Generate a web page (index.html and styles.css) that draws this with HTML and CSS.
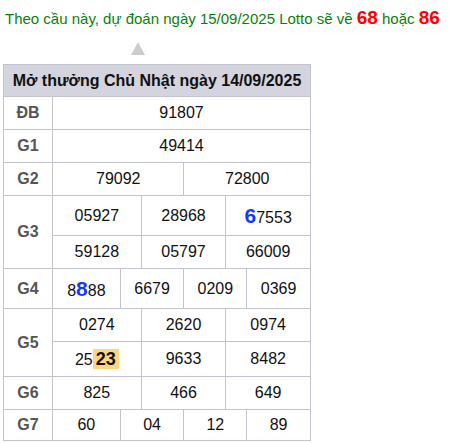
FILE: index.html
```html
<!DOCTYPE html>
<html lang="vi">
<head>
<meta charset="utf-8">
<link rel="stylesheet" href="styles.css">
</head>
<body>
<div class="page">
  <p class="predict">Theo cầu này, dự đoán ngày 15/09/2025 Lotto sẽ về <b class="hot">68</b> hoặc <b class="hot">86</b></p>
  <div class="arrow"></div>
  <table class="kq">
    <tr><th colspan="2" class="head">Mở thưởng Chủ Nhật ngày 14/09/2025</th></tr>
    <tr><td class="lbl">ĐB</td><td class="nums"><div class="r c1"><div>91807</div></div></td></tr>
    <tr><td class="lbl">G1</td><td class="nums"><div class="r c1"><div>49414</div></div></td></tr>
    <tr><td class="lbl">G2</td><td class="nums"><div class="r c2"><div>79092</div><div>72800</div></div></td></tr>
    <tr><td class="lbl">G3</td><td class="nums">
      <div class="r c3 tall"><div>05927</div><div>28968</div><div><b class="big">6</b>7553</div></div>
      <div class="r c3 sep"><div>59128</div><div>05797</div><div>66009</div></div>
    </td></tr>
    <tr><td class="lbl">G4</td><td class="nums"><div class="r c4 tall"><div>8<b class="big">8</b>88</div><div>6679</div><div>0209</div><div>0369</div></div></td></tr>
    <tr><td class="lbl">G5</td><td class="nums">
      <div class="r c3"><div>0274</div><div>2620</div><div>0974</div></div>
      <div class="r c3 sep mid"><div>25<b class="mark">23</b></div><div>9633</div><div>8482</div></div>
    </td></tr>
    <tr><td class="lbl">G6</td><td class="nums"><div class="r c3"><div>825</div><div>466</div><div>649</div></div></td></tr>
    <tr><td class="lbl">G7</td><td class="nums"><div class="r c4 last"><div>60</div><div>04</div><div>12</div><div>89</div></div></td></tr>
  </table>
</div>
</body>
</html>
```
FILE: styles.css
```css
* { box-sizing: border-box; }
body {
  margin: 0;
  background: #fff;
  font-family: "Liberation Sans", Arial, sans-serif;
}
.page { padding: 8px 0 0 3px; }
.predict {
  margin: 0 0 0 2px;
  font-size: 15px;
  line-height: 20px;
  color: #0a7f0a;
  white-space: nowrap;
}
.hot { color: #ff0000; font-size: 19px; }
.arrow {
  width: 0; height: 0;
  margin: 13px 0 9px 128px;
  border-left: 7.5px solid transparent;
  border-right: 7.5px solid transparent;
  border-bottom: 13px solid #cccccc;
}
.kq {
  width: 308px;
  border-collapse: collapse;
  border: 1px solid #c3c3cd;
  font-size: 16px;
  color: #111;
}
.kq td, .kq th { border: 1px solid #c3c3cd; padding: 0; }
.head {
  background: #d3d4dd;
  height: 32px;
  font-weight: bold;
  text-align: center;
  color: #111;
}
.lbl {
  width: 49px;
  text-align: center;
  font-weight: bold;
  color: #555;
}
.r { display: grid; }
.r > div {
  text-align: center;
  padding: 7px 0;
  line-height: 18px;
  border-left: 1px solid #c3c3cd;
}
.r > div:first-child { border-left: 0; }
.c1 { grid-template-columns: 1fr; }
.c2 { grid-template-columns: 131fr 127fr; }
.c3 { grid-template-columns: 88fr 85fr 85fr; }
.c4 { grid-template-columns: 67fr 64fr 63fr 64fr; }
.sep { border-top: 1px solid #c3c3cd; }
.tall > div { padding: 8px 0 6px; line-height: 23px; }
.mid > div { padding: 7px 0 6px; line-height: 20px; }
.last > div { padding: 6px 0 6px; }
.big { color: #1438ff; font-size: 21px; }
.mark {
  display: inline-block;
  background: #fdd683;
  font-size: 18px;
  line-height: 20px;
  padding: 0 3px;
}
```
